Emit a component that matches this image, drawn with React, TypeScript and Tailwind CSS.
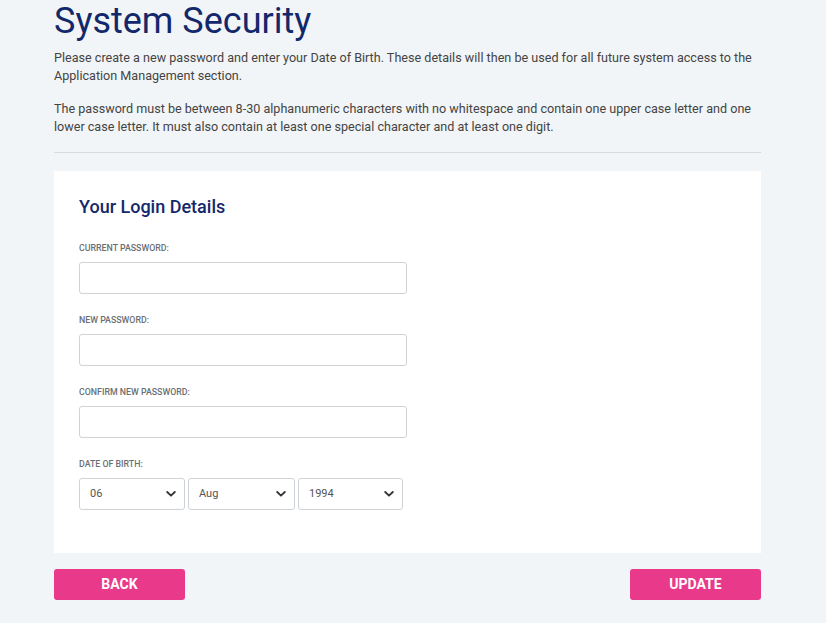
import React from "react";

const Chevron = () => (
  <svg
    className="pointer-events-none absolute right-[9px] top-1/2 -translate-y-1/2"
    width="10"
    height="7"
    viewBox="0 0 10 7"
    fill="none"
  >
    <path d="M1.2 1.5 L5 5.2 L8.8 1.5" stroke="#333" strokeWidth="1.8" strokeLinecap="round" strokeLinejoin="round" />
  </svg>
);

function Select({ value, options, width }: { value: string; options: string[]; width: string }) {
  return (
    <div className={`relative ${width}`}>
      <select
        defaultValue={value}
        className="h-[32px] w-full appearance-none rounded-[3px] border border-[#cfd3d7] bg-white pl-[10px] text-[11px] text-[#555] outline-none"
      >
        {options.map((o) => (
          <option key={o}>{o}</option>
        ))}
      </select>
      <Chevron />
    </div>
  );
}

function Field({ label }: { label: string }) {
  return (
    <div className="mb-[20px]">
      <div className="mb-[8px] h-[12px] text-[8.8px] font-medium uppercase leading-[12px] text-[#6b6f73]">{label}</div>
      <input
        type="password"
        className="block h-[32px] w-[328px] rounded-[3px] border border-[#cfd3d7] bg-white outline-none"
      />
    </div>
  );
}

export default function App() {
  return (
    <div
      className="min-h-[623px] w-full bg-[#f2f5f7]"
      style={{ fontFamily: "Roboto, 'Liberation Sans', sans-serif" }}
    >
      <div className="ml-[54px] w-[707px]">
        <h1 className="m-0 text-[36px] font-normal leading-[42px] text-[#13286a]">System Security</h1>
        <p className="mt-[7px] text-[12.6px] leading-[18px] text-[#444]">
          Please create a new password and enter your Date of Birth. These details will then be used for all future system access to the Application Management section.
        </p>
        <p className="mt-[15px] text-[12.6px] leading-[18px] text-[#444]">
          The password must be between 8-30 alphanumeric characters with no whitespace and contain one upper case letter and one lower case letter. It must also contain at least one special character and at least one digit.
        </p>
        <div className="mt-[16px] h-px w-full bg-[#d6dbe0]" />
        <div className="mt-[18px] bg-white pb-[43px] pl-[25px] pt-[24px]">
          <h2 className="text-[18px] font-medium leading-[24px] text-[#13286a]">Your Login Details</h2>
          <div className="mt-[23px]">
            <Field label="Current Password:" />
            <Field label="New Password:" />
            <Field label="Confirm New Password:" />
            <div>
              <div className="mb-[8px] h-[12px] text-[8.8px] font-medium uppercase leading-[12px] text-[#6b6f73]">Date of Birth:</div>
              <div className="flex gap-[3px]">
                <Select value="06" width="w-[106px]" options={["01", "02", "03", "04", "05", "06", "07"]} />
                <Select value="Aug" width="w-[107px]" options={["Jul", "Aug", "Sep"]} />
                <Select value="1994" width="w-[105px]" options={["1993", "1994", "1995"]} />
              </div>
            </div>
          </div>
        </div>
        <div className="mt-[16px] flex justify-between">
          <button className="h-[31px] w-[131px] rounded-[3px] bg-[#e8398a] text-[14px] font-bold text-white">BACK</button>
          <button className="h-[31px] w-[131px] rounded-[3px] bg-[#e8398a] text-[14px] font-bold text-white">UPDATE</button>
        </div>
      </div>
    </div>
  );
}
